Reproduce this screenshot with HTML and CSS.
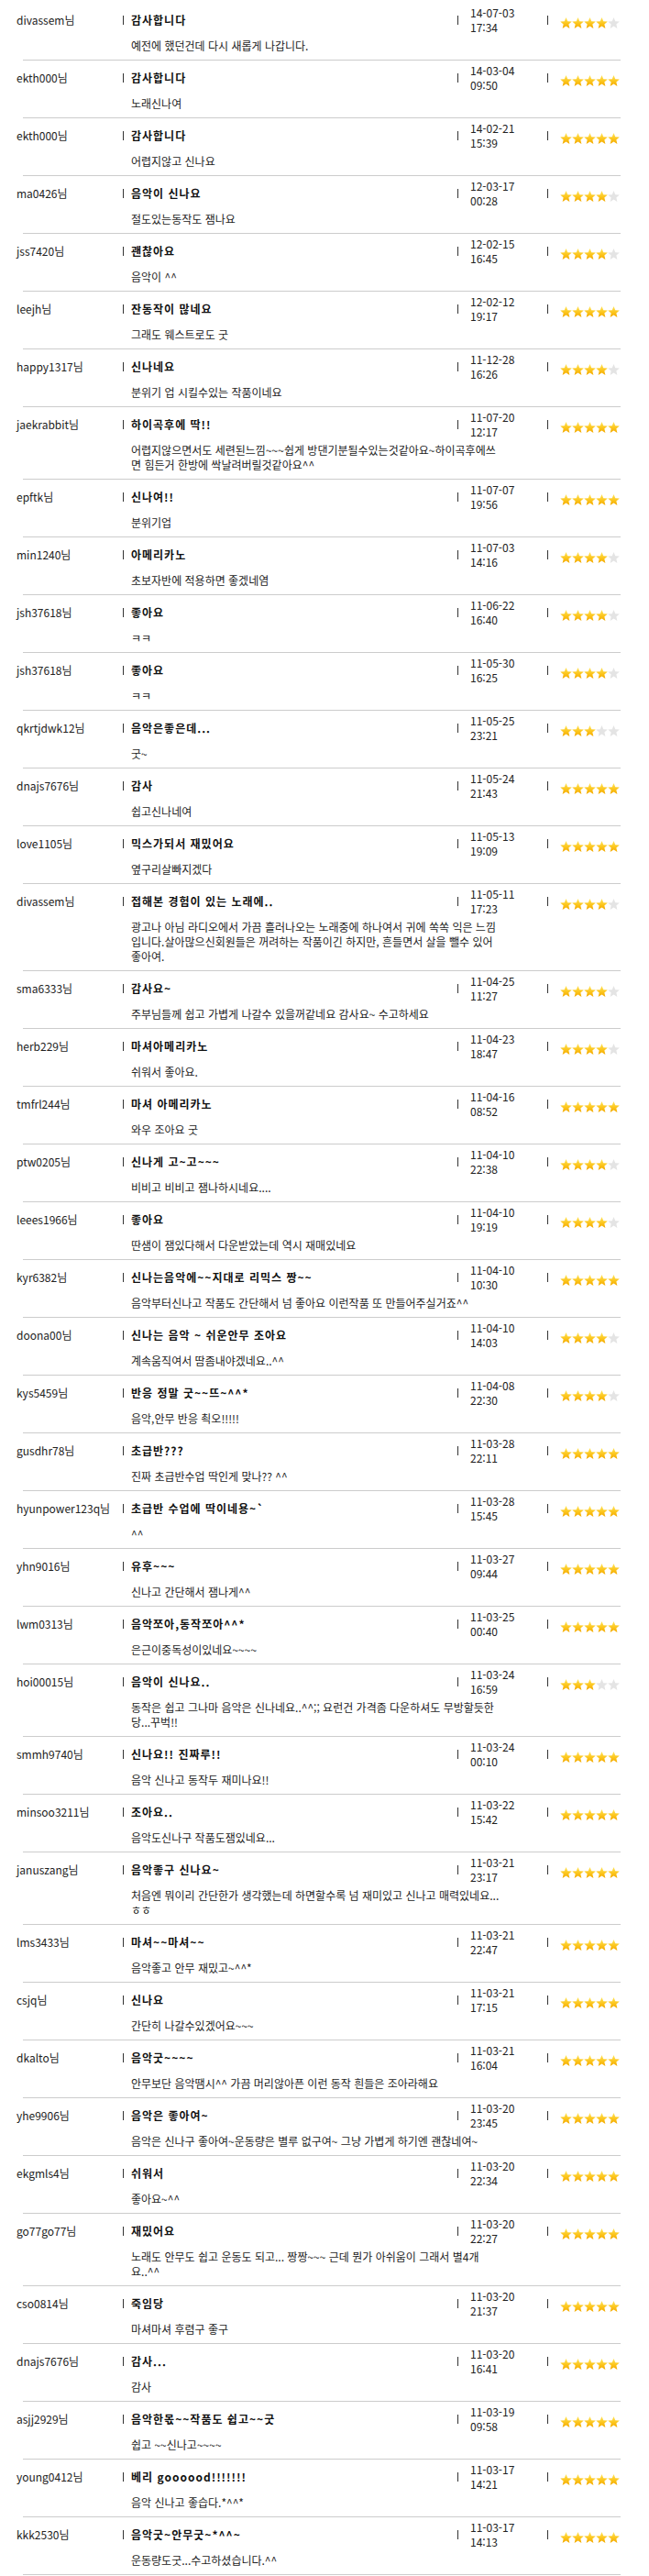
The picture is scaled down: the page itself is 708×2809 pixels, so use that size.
FILE: index.html
```html
<!DOCTYPE html>
<html lang="ko">
<head>
<meta charset="utf-8">
<title>상품평</title>
<link rel="stylesheet" href="styles.css">
</head>
<body>
<svg class="defs" width="0" height="0" aria-hidden="true">
  <defs>
    <linearGradient id="gold" x1="0" y1="0" x2="0" y2="1">
      <stop offset="0" stop-color="#ffe45a"/>
      <stop offset="0.55" stop-color="#fcc51c"/>
      <stop offset="1" stop-color="#f3a800"/>
    </linearGradient>
    <path id="star" d="M6.5 0L8.26 4.17L12.78 4.56L9.35 7.53L10.38 11.94L6.5 9.6L2.62 11.94L3.65 7.53L0.22 4.56L4.74 4.17Z"/>
  </defs>
</svg>
<ul class="reviews">
<li class="review"><div class="head"><span class="user">divassem님</span><strong class="title">감사합니다</strong><span class="date"><span class="dt">14-07-03<br>17:34</span></span><span class="rating"><svg class="stars s4" viewBox="0 0 65 12"><use href="#star"/><use href="#star" x="13"/><use href="#star" x="26"/><use href="#star" x="39"/><use href="#star" x="52"/></svg></span></div><p class="body">예전에 했던건데 다시 새롭게 나갑니다.</p></li>
<li class="review"><div class="head"><span class="user">ekth000님</span><strong class="title">감사합니다</strong><span class="date"><span class="dt">14-03-04<br>09:50</span></span><span class="rating"><svg class="stars s5" viewBox="0 0 65 12"><use href="#star"/><use href="#star" x="13"/><use href="#star" x="26"/><use href="#star" x="39"/><use href="#star" x="52"/></svg></span></div><p class="body">노래신나여</p></li>
<li class="review"><div class="head"><span class="user">ekth000님</span><strong class="title">감사합니다</strong><span class="date"><span class="dt">14-02-21<br>15:39</span></span><span class="rating"><svg class="stars s5" viewBox="0 0 65 12"><use href="#star"/><use href="#star" x="13"/><use href="#star" x="26"/><use href="#star" x="39"/><use href="#star" x="52"/></svg></span></div><p class="body">어렵지않고 신나요</p></li>
<li class="review"><div class="head"><span class="user">ma0426님</span><strong class="title">음악이 신나요</strong><span class="date"><span class="dt">12-03-17<br>00:28</span></span><span class="rating"><svg class="stars s4" viewBox="0 0 65 12"><use href="#star"/><use href="#star" x="13"/><use href="#star" x="26"/><use href="#star" x="39"/><use href="#star" x="52"/></svg></span></div><p class="body">절도있는동작도 잼나요</p></li>
<li class="review"><div class="head"><span class="user">jss7420님</span><strong class="title">괜찮아요</strong><span class="date"><span class="dt">12-02-15<br>16:45</span></span><span class="rating"><svg class="stars s4" viewBox="0 0 65 12"><use href="#star"/><use href="#star" x="13"/><use href="#star" x="26"/><use href="#star" x="39"/><use href="#star" x="52"/></svg></span></div><p class="body">음악이 ^^</p></li>
<li class="review"><div class="head"><span class="user">leejh님</span><strong class="title">잔동작이 많네요</strong><span class="date"><span class="dt">12-02-12<br>19:17</span></span><span class="rating"><svg class="stars s5" viewBox="0 0 65 12"><use href="#star"/><use href="#star" x="13"/><use href="#star" x="26"/><use href="#star" x="39"/><use href="#star" x="52"/></svg></span></div><p class="body">그래도 웨스트로도 굿</p></li>
<li class="review"><div class="head"><span class="user">happy1317님</span><strong class="title">신나네요</strong><span class="date"><span class="dt">11-12-28<br>16:26</span></span><span class="rating"><svg class="stars s4" viewBox="0 0 65 12"><use href="#star"/><use href="#star" x="13"/><use href="#star" x="26"/><use href="#star" x="39"/><use href="#star" x="52"/></svg></span></div><p class="body">분위기 업 시킬수있는 작품이네요</p></li>
<li class="review"><div class="head"><span class="user">jaekrabbit님</span><strong class="title">하이곡후에 딱!!</strong><span class="date"><span class="dt">11-07-20<br>12:17</span></span><span class="rating"><svg class="stars s5" viewBox="0 0 65 12"><use href="#star"/><use href="#star" x="13"/><use href="#star" x="26"/><use href="#star" x="39"/><use href="#star" x="52"/></svg></span></div><p class="body">어렵지않으면서도 세련된느낌~~~쉽게 방댄기분될수있는것같아요~하이곡후에쓰<br>면 힘든거 한방에 싹날려버릴것같아요^^</p></li>
<li class="review"><div class="head"><span class="user">epftk님</span><strong class="title">신나여!!</strong><span class="date"><span class="dt">11-07-07<br>19:56</span></span><span class="rating"><svg class="stars s5" viewBox="0 0 65 12"><use href="#star"/><use href="#star" x="13"/><use href="#star" x="26"/><use href="#star" x="39"/><use href="#star" x="52"/></svg></span></div><p class="body">분위기업</p></li>
<li class="review"><div class="head"><span class="user">min1240님</span><strong class="title">아메리카노</strong><span class="date"><span class="dt">11-07-03<br>14:16</span></span><span class="rating"><svg class="stars s4" viewBox="0 0 65 12"><use href="#star"/><use href="#star" x="13"/><use href="#star" x="26"/><use href="#star" x="39"/><use href="#star" x="52"/></svg></span></div><p class="body">초보자반에 적용하면 좋겠네염</p></li>
<li class="review"><div class="head"><span class="user">jsh37618님</span><strong class="title">좋아요</strong><span class="date"><span class="dt">11-06-22<br>16:40</span></span><span class="rating"><svg class="stars s4" viewBox="0 0 65 12"><use href="#star"/><use href="#star" x="13"/><use href="#star" x="26"/><use href="#star" x="39"/><use href="#star" x="52"/></svg></span></div><p class="body">ㅋㅋ</p></li>
<li class="review"><div class="head"><span class="user">jsh37618님</span><strong class="title">좋아요</strong><span class="date"><span class="dt">11-05-30<br>16:25</span></span><span class="rating"><svg class="stars s4" viewBox="0 0 65 12"><use href="#star"/><use href="#star" x="13"/><use href="#star" x="26"/><use href="#star" x="39"/><use href="#star" x="52"/></svg></span></div><p class="body">ㅋㅋ</p></li>
<li class="review"><div class="head"><span class="user">qkrtjdwk12님</span><strong class="title">음악은좋은데...</strong><span class="date"><span class="dt">11-05-25<br>23:21</span></span><span class="rating"><svg class="stars s3" viewBox="0 0 65 12"><use href="#star"/><use href="#star" x="13"/><use href="#star" x="26"/><use href="#star" x="39"/><use href="#star" x="52"/></svg></span></div><p class="body">굿~</p></li>
<li class="review"><div class="head"><span class="user">dnajs7676님</span><strong class="title">감사</strong><span class="date"><span class="dt">11-05-24<br>21:43</span></span><span class="rating"><svg class="stars s5" viewBox="0 0 65 12"><use href="#star"/><use href="#star" x="13"/><use href="#star" x="26"/><use href="#star" x="39"/><use href="#star" x="52"/></svg></span></div><p class="body">쉽고신나네여</p></li>
<li class="review"><div class="head"><span class="user">love1105님</span><strong class="title">믹스가되서 재밌어요</strong><span class="date"><span class="dt">11-05-13<br>19:09</span></span><span class="rating"><svg class="stars s5" viewBox="0 0 65 12"><use href="#star"/><use href="#star" x="13"/><use href="#star" x="26"/><use href="#star" x="39"/><use href="#star" x="52"/></svg></span></div><p class="body">옆구리살빠지겠다</p></li>
<li class="review"><div class="head"><span class="user">divassem님</span><strong class="title">접해본 경험이 있는 노래에..</strong><span class="date"><span class="dt">11-05-11<br>17:23</span></span><span class="rating"><svg class="stars s4" viewBox="0 0 65 12"><use href="#star"/><use href="#star" x="13"/><use href="#star" x="26"/><use href="#star" x="39"/><use href="#star" x="52"/></svg></span></div><p class="body">광고나 아님 라디오에서 가끔 흘러나오는 노래중에 하나여서 귀에 쏙쏙 익은 느낌<br>입니다.살아많으신회원들은 꺼려하는 작품이긴 하지만, 흔들면서 살을 뺄수 있어<br>좋아여.</p></li>
<li class="review"><div class="head"><span class="user">sma6333님</span><strong class="title">감사요~</strong><span class="date"><span class="dt">11-04-25<br>11:27</span></span><span class="rating"><svg class="stars s4" viewBox="0 0 65 12"><use href="#star"/><use href="#star" x="13"/><use href="#star" x="26"/><use href="#star" x="39"/><use href="#star" x="52"/></svg></span></div><p class="body">주부님들께 쉽고 가볍게 나갈수 있을꺼같네요 감사요~ 수고하세요</p></li>
<li class="review"><div class="head"><span class="user">herb229님</span><strong class="title">마셔아메리카노</strong><span class="date"><span class="dt">11-04-23<br>18:47</span></span><span class="rating"><svg class="stars s4" viewBox="0 0 65 12"><use href="#star"/><use href="#star" x="13"/><use href="#star" x="26"/><use href="#star" x="39"/><use href="#star" x="52"/></svg></span></div><p class="body">쉬워서 좋아요.</p></li>
<li class="review"><div class="head"><span class="user">tmfrl244님</span><strong class="title">마셔 아메리카노</strong><span class="date"><span class="dt">11-04-16<br>08:52</span></span><span class="rating"><svg class="stars s5" viewBox="0 0 65 12"><use href="#star"/><use href="#star" x="13"/><use href="#star" x="26"/><use href="#star" x="39"/><use href="#star" x="52"/></svg></span></div><p class="body">와우 조아요 굿</p></li>
<li class="review"><div class="head"><span class="user">ptw0205님</span><strong class="title">신나게 고~고~~~</strong><span class="date"><span class="dt">11-04-10<br>22:38</span></span><span class="rating"><svg class="stars s4" viewBox="0 0 65 12"><use href="#star"/><use href="#star" x="13"/><use href="#star" x="26"/><use href="#star" x="39"/><use href="#star" x="52"/></svg></span></div><p class="body">비비고 비비고 잼나하시네요....</p></li>
<li class="review"><div class="head"><span class="user">leees1966님</span><strong class="title">좋아요</strong><span class="date"><span class="dt">11-04-10<br>19:19</span></span><span class="rating"><svg class="stars s4" viewBox="0 0 65 12"><use href="#star"/><use href="#star" x="13"/><use href="#star" x="26"/><use href="#star" x="39"/><use href="#star" x="52"/></svg></span></div><p class="body">딴샘이 잼있다해서 다운받았는데 역시 재매있네요</p></li>
<li class="review"><div class="head"><span class="user">kyr6382님</span><strong class="title">신나는음악에~~지대로 리믹스 짱~~</strong><span class="date"><span class="dt">11-04-10<br>10:30</span></span><span class="rating"><svg class="stars s5" viewBox="0 0 65 12"><use href="#star"/><use href="#star" x="13"/><use href="#star" x="26"/><use href="#star" x="39"/><use href="#star" x="52"/></svg></span></div><p class="body">음악부터신나고 작품도 간단해서 넘 좋아요 이런작품 또 만들어주실거죠^^</p></li>
<li class="review"><div class="head"><span class="user">doona00님</span><strong class="title">신나는 음악 ~ 쉬운안무 조아요</strong><span class="date"><span class="dt">11-04-10<br>14:03</span></span><span class="rating"><svg class="stars s4" viewBox="0 0 65 12"><use href="#star"/><use href="#star" x="13"/><use href="#star" x="26"/><use href="#star" x="39"/><use href="#star" x="52"/></svg></span></div><p class="body">계속움직여서 땀좀내야겠네요..^^</p></li>
<li class="review"><div class="head"><span class="user">kys5459님</span><strong class="title">반응 정말 굿~~뜨~^^*</strong><span class="date"><span class="dt">11-04-08<br>22:30</span></span><span class="rating"><svg class="stars s4" viewBox="0 0 65 12"><use href="#star"/><use href="#star" x="13"/><use href="#star" x="26"/><use href="#star" x="39"/><use href="#star" x="52"/></svg></span></div><p class="body">음악,안무 반응 쵝오!!!!!</p></li>
<li class="review"><div class="head"><span class="user">gusdhr78님</span><strong class="title">초급반???</strong><span class="date"><span class="dt">11-03-28<br>22:11</span></span><span class="rating"><svg class="stars s5" viewBox="0 0 65 12"><use href="#star"/><use href="#star" x="13"/><use href="#star" x="26"/><use href="#star" x="39"/><use href="#star" x="52"/></svg></span></div><p class="body">진짜 초급반수업 딱인게 맞나?? ^^</p></li>
<li class="review"><div class="head"><span class="user">hyunpower123q님</span><strong class="title">초급반 수업에 딱이네용~`</strong><span class="date"><span class="dt">11-03-28<br>15:45</span></span><span class="rating"><svg class="stars s5" viewBox="0 0 65 12"><use href="#star"/><use href="#star" x="13"/><use href="#star" x="26"/><use href="#star" x="39"/><use href="#star" x="52"/></svg></span></div><p class="body">^^</p></li>
<li class="review"><div class="head"><span class="user">yhn9016님</span><strong class="title">유후~~~</strong><span class="date"><span class="dt">11-03-27<br>09:44</span></span><span class="rating"><svg class="stars s5" viewBox="0 0 65 12"><use href="#star"/><use href="#star" x="13"/><use href="#star" x="26"/><use href="#star" x="39"/><use href="#star" x="52"/></svg></span></div><p class="body">신나고 간단해서 잼나게^^</p></li>
<li class="review"><div class="head"><span class="user">lwm0313님</span><strong class="title">음악쪼아,동작쪼아^^*</strong><span class="date"><span class="dt">11-03-25<br>00:40</span></span><span class="rating"><svg class="stars s5" viewBox="0 0 65 12"><use href="#star"/><use href="#star" x="13"/><use href="#star" x="26"/><use href="#star" x="39"/><use href="#star" x="52"/></svg></span></div><p class="body">은근이중독성이있네요~~~~</p></li>
<li class="review"><div class="head"><span class="user">hoi00015님</span><strong class="title">음악이 신나요..</strong><span class="date"><span class="dt">11-03-24<br>16:59</span></span><span class="rating"><svg class="stars s3" viewBox="0 0 65 12"><use href="#star"/><use href="#star" x="13"/><use href="#star" x="26"/><use href="#star" x="39"/><use href="#star" x="52"/></svg></span></div><p class="body">동작은 쉽고 그나마 음악은 신나네요..^^;; 요런건 가격좀 다운하셔도 무방할듯한<br>당...꾸벅!!</p></li>
<li class="review"><div class="head"><span class="user">smmh9740님</span><strong class="title">신나요!! 진짜루!!</strong><span class="date"><span class="dt">11-03-24<br>00:10</span></span><span class="rating"><svg class="stars s5" viewBox="0 0 65 12"><use href="#star"/><use href="#star" x="13"/><use href="#star" x="26"/><use href="#star" x="39"/><use href="#star" x="52"/></svg></span></div><p class="body">음악 신나고 동작두 재미나요!!</p></li>
<li class="review"><div class="head"><span class="user">minsoo3211님</span><strong class="title">조아요..</strong><span class="date"><span class="dt">11-03-22<br>15:42</span></span><span class="rating"><svg class="stars s5" viewBox="0 0 65 12"><use href="#star"/><use href="#star" x="13"/><use href="#star" x="26"/><use href="#star" x="39"/><use href="#star" x="52"/></svg></span></div><p class="body">음악도신나구 작품도잼있네요...</p></li>
<li class="review"><div class="head"><span class="user">januszang님</span><strong class="title">음악좋구 신나요~</strong><span class="date"><span class="dt">11-03-21<br>23:17</span></span><span class="rating"><svg class="stars s5" viewBox="0 0 65 12"><use href="#star"/><use href="#star" x="13"/><use href="#star" x="26"/><use href="#star" x="39"/><use href="#star" x="52"/></svg></span></div><p class="body">처음엔 뭐이리 간단한가 생각했는데 하면할수록 넘 재미있고 신나고 매력있네요...<br>ㅎㅎ</p></li>
<li class="review"><div class="head"><span class="user">lms3433님</span><strong class="title">마셔~~마셔~~</strong><span class="date"><span class="dt">11-03-21<br>22:47</span></span><span class="rating"><svg class="stars s5" viewBox="0 0 65 12"><use href="#star"/><use href="#star" x="13"/><use href="#star" x="26"/><use href="#star" x="39"/><use href="#star" x="52"/></svg></span></div><p class="body">음악좋고 안무 재밌고~^^*</p></li>
<li class="review"><div class="head"><span class="user">csjq님</span><strong class="title">신나요</strong><span class="date"><span class="dt">11-03-21<br>17:15</span></span><span class="rating"><svg class="stars s5" viewBox="0 0 65 12"><use href="#star"/><use href="#star" x="13"/><use href="#star" x="26"/><use href="#star" x="39"/><use href="#star" x="52"/></svg></span></div><p class="body">간단히 나갈수있겠어요~~~</p></li>
<li class="review"><div class="head"><span class="user">dkalto님</span><strong class="title">음악굿~~~~</strong><span class="date"><span class="dt">11-03-21<br>16:04</span></span><span class="rating"><svg class="stars s5" viewBox="0 0 65 12"><use href="#star"/><use href="#star" x="13"/><use href="#star" x="26"/><use href="#star" x="39"/><use href="#star" x="52"/></svg></span></div><p class="body">안무보단 음악땜시^^ 가끔 머리않아픈 이런 동작 흰들은 조아라해요</p></li>
<li class="review"><div class="head"><span class="user">yhe9906님</span><strong class="title">음악은 좋아여~</strong><span class="date"><span class="dt">11-03-20<br>23:45</span></span><span class="rating"><svg class="stars s5" viewBox="0 0 65 12"><use href="#star"/><use href="#star" x="13"/><use href="#star" x="26"/><use href="#star" x="39"/><use href="#star" x="52"/></svg></span></div><p class="body">음악은 신나구 좋아여~운동량은 별루 없구여~ 그냥 가볍게 하기엔 괜찮네여~</p></li>
<li class="review"><div class="head"><span class="user">ekgmls4님</span><strong class="title">쉬워서</strong><span class="date"><span class="dt">11-03-20<br>22:34</span></span><span class="rating"><svg class="stars s5" viewBox="0 0 65 12"><use href="#star"/><use href="#star" x="13"/><use href="#star" x="26"/><use href="#star" x="39"/><use href="#star" x="52"/></svg></span></div><p class="body">좋아요~^^</p></li>
<li class="review"><div class="head"><span class="user">go77go77님</span><strong class="title">재밌어요</strong><span class="date"><span class="dt">11-03-20<br>22:27</span></span><span class="rating"><svg class="stars s5" viewBox="0 0 65 12"><use href="#star"/><use href="#star" x="13"/><use href="#star" x="26"/><use href="#star" x="39"/><use href="#star" x="52"/></svg></span></div><p class="body">노래도 안무도 쉽고 운동도 되고... 짱짱~~~ 근데 뭔가 아쉬움이 그래서 별4개<br>요..^^</p></li>
<li class="review"><div class="head"><span class="user">cso0814님</span><strong class="title">죽임당</strong><span class="date"><span class="dt">11-03-20<br>21:37</span></span><span class="rating"><svg class="stars s5" viewBox="0 0 65 12"><use href="#star"/><use href="#star" x="13"/><use href="#star" x="26"/><use href="#star" x="39"/><use href="#star" x="52"/></svg></span></div><p class="body">마셔마셔 후렴구 좋구</p></li>
<li class="review"><div class="head"><span class="user">dnajs7676님</span><strong class="title">감사...</strong><span class="date"><span class="dt">11-03-20<br>16:41</span></span><span class="rating"><svg class="stars s5" viewBox="0 0 65 12"><use href="#star"/><use href="#star" x="13"/><use href="#star" x="26"/><use href="#star" x="39"/><use href="#star" x="52"/></svg></span></div><p class="body">감사</p></li>
<li class="review"><div class="head"><span class="user">asjj2929님</span><strong class="title">음악한몫~~작품도 쉽고~~굿</strong><span class="date"><span class="dt">11-03-19<br>09:58</span></span><span class="rating"><svg class="stars s5" viewBox="0 0 65 12"><use href="#star"/><use href="#star" x="13"/><use href="#star" x="26"/><use href="#star" x="39"/><use href="#star" x="52"/></svg></span></div><p class="body">쉽고 ~~신나고~~~~</p></li>
<li class="review"><div class="head"><span class="user">young0412님</span><strong class="title">베리 goooood!!!!!!!</strong><span class="date"><span class="dt">11-03-17<br>14:21</span></span><span class="rating"><svg class="stars s5" viewBox="0 0 65 12"><use href="#star"/><use href="#star" x="13"/><use href="#star" x="26"/><use href="#star" x="39"/><use href="#star" x="52"/></svg></span></div><p class="body">음악 신나고 좋습다.*^^*</p></li>
<li class="review"><div class="head"><span class="user">kkk2530님</span><strong class="title">음악굿~안무굿~*^^~</strong><span class="date"><span class="dt">11-03-17<br>14:13</span></span><span class="rating"><svg class="stars s5" viewBox="0 0 65 12"><use href="#star"/><use href="#star" x="13"/><use href="#star" x="26"/><use href="#star" x="39"/><use href="#star" x="52"/></svg></span></div><p class="body">운동량도굿...수고하셨습니다.^^</p></li>
</ul>
</body>
</html>
```
FILE: styles.css
```css
html, body {
  margin: 0;
  padding: 0;
  background: #ffffff;
}

body {
  font-family: "Noto Sans CJK KR", "Noto Sans", sans-serif;
  font-size: 12px;
  color: #222222;
}

.defs {
  display: block;
  width: 0;
  height: 0;
  overflow: hidden;
}

.reviews {
  list-style: none;
  margin: 0;
  padding: 3px 0 0 0;
}

.review {
  margin: 0 31px 0 25px;
  padding: 3px 0 7px 0;
  border-bottom: 1px solid #cccccc;
}

.head {
  display: grid;
  grid-template-columns: 109px 365px 98px auto;
  align-items: center;
  height: 32px;
}

.user {
  margin-left: -7px;
  line-height: 16px;
  white-space: nowrap;
}

.title,
.date,
.rating {
  display: flex;
  align-items: center;
}

.title::before,
.date::before,
.rating::before {
  content: "";
  flex: none;
  width: 1px;
  height: 10px;
  background: #333333;
}

.title {
  font-weight: 700;
  letter-spacing: 1px;
  color: #111111;
  line-height: 16px;
  white-space: nowrap;
}

.title::before {
  margin-right: 8px;
}

.date::before {
  margin-right: 13px;
}

.dt {
  display: block;
  line-height: 16px;
  white-space: nowrap;
}

.rating {
  margin-top: 5px;
}

.rating::before {
  margin-right: 13px;
  margin-top: -5px;
}

.stars {
  display: block;
  width: 65px;
  height: 12px;
  fill: #e4e4e4;
}

.s5 use,
.s4 use:nth-child(-n+4),
.s3 use:nth-child(-n+3) {
  fill: url(#gold);
}

.body {
  margin: 4px 0 0 118px;
  width: 460px;
  line-height: 16px;
  white-space: nowrap;
}
```
